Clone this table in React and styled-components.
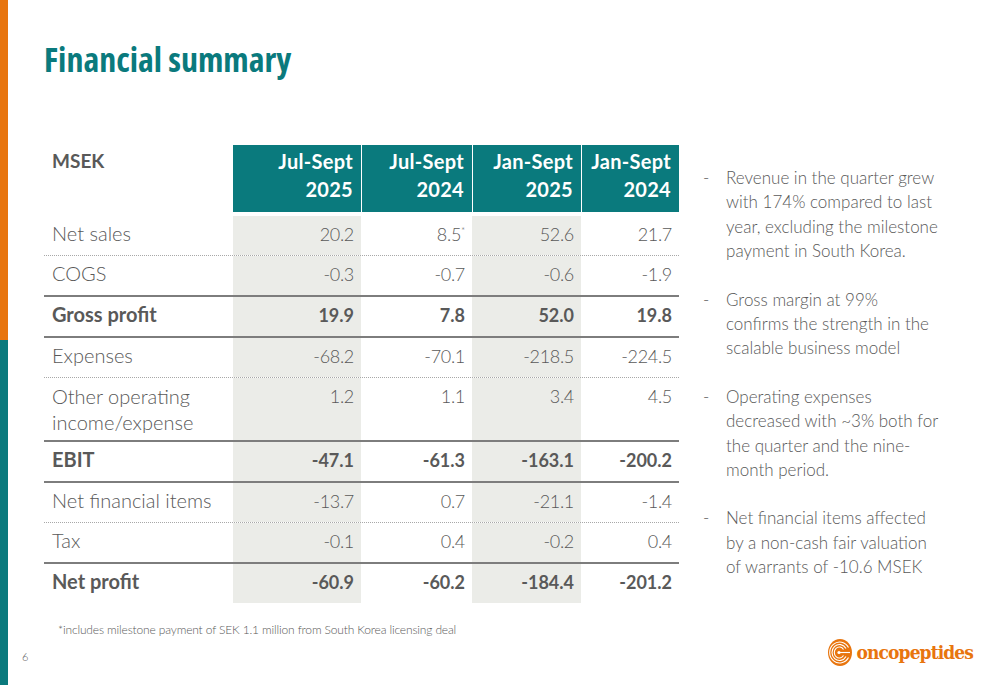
import React from "react";
import styled, { createGlobalStyle } from "styled-components";

const GlobalStyle = createGlobalStyle`
  html, body {
    margin: 0;
    padding: 0;
    background: #fff;
  }
  body {
    font-family: Lato, "Open Sans", sans-serif;
    color: #595959;
  }
`;

const TEAL = "#0a7a7d";
const ORANGE = "#e8750e";
const GREY_TEXT = "#595959";
const SHADE = "#ebece8";

const Slide = styled.div`
  width: 1000px;
  height: 685px;
  display: flex;
  overflow: hidden;
  background: #fff;
`;

const SideBar = styled.div`
  flex: 0 0 8px;
  display: flex;
  flex-direction: column;
`;

const BarSegment = styled.div`
  background: ${({ $color }) => $color};
  flex: ${({ $size }) => ($size ? `0 0 ${$size}px` : "1")};
`;

const Main = styled.div`
  flex: 1;
  display: flex;
  flex-direction: column;
`;

const Title = styled.h1`
  margin: 0;
  padding: 37px 0 0 36px;
  font-family: "Open Sans", sans-serif;
  font-weight: 700;
  font-size: 34px;
  font-stretch: 75%;
  line-height: 44px;
  color: ${TEAL};
`;

const Content = styled.div`
  display: flex;
  margin-top: 64px;
  padding-left: 36px;
`;

const Table = styled.div`
  width: 635px;
  display: flex;
  flex-direction: column;
`;

const lines = {
  solid: "2px solid #7d7d7d",
  dotted: "1px dotted #a8a8a8",
  none: "none",
};

const Row = styled.div`
  display: grid;
  grid-template-columns: 189px 128px 111px 109px 98px;
  height: ${({ $h }) => $h}px;
  border-bottom: ${({ $line }) => lines[$line || "none"]};
`;

const HeaderRow = styled(Row)`
  margin-bottom: 4px;
`;

const HeadCell = styled.div`
  padding: 2px 8px 0 8px;
  font-size: ${({ $left }) => ($left ? 19 : 20)}px;
  font-weight: 700;
  line-height: 28px;
  letter-spacing: ${({ $left }) => ($left ? 0 : 0.3)}px;
  text-align: ${({ $left }) => ($left ? "left" : "right")};
  color: ${({ $left }) => ($left ? GREY_TEXT : "#fff")};
  background: ${({ $left }) => ($left ? "transparent" : TEAL)};
  border-left: ${({ $gap }) => ($gap ? "1px solid #fff" : "none")};
`;

const Label = styled.div`
  padding: 5px 0 0 8px;
  font-size: 20px;
  line-height: ${({ $tall }) => ($tall ? 26 : 24)}px;
  font-weight: ${({ $bold }) => ($bold ? 700 : 300)};
`;

const Value = styled.div`
  padding: 6px 7px 0 0;
  text-align: right;
  font-size: 18px;
  line-height: 24px;
  letter-spacing: ${({ $bold }) => ($bold ? 0 : -0.3)}px;
  font-weight: ${({ $bold }) => ($bold ? 700 : 300)};
  background: ${({ $shade }) => ($shade ? SHADE : "transparent")};
`;

const Star = styled.sup`
  font-size: 10px;
  line-height: 0;
  vertical-align: 7px;
`;

const Bullets = styled.ul`
  list-style: none;
  margin: 21px 0 0 24px;
  padding: 0;
  display: flex;
  flex-direction: column;
  gap: 24px;
`;

const Bullet = styled.li`
  display: flex;
  font-size: 17px;
  line-height: 24.4px;
  font-weight: 300;
`;

const Dash = styled.span`
  flex: 0 0 23px;
`;

const Footnote = styled.div`
  margin-top: 19px;
  padding-left: 50px;
  font-size: 12px;
  line-height: 16px;
  letter-spacing: -0.15px;
  font-weight: 300;
`;

const BottomRow = styled.div`
  display: flex;
  align-items: center;
  justify-content: space-between;
  padding: 0 27px 0 14px;
`;

const PageNumber = styled.span`
  padding-top: 8px;
  font-size: 11px;
  font-weight: 300;
`;

const Logo = styled.div`
  display: flex;
  align-items: center;
  gap: 5px;
  color: ${ORANGE};
`;

const LogoText = styled.span`
  font-family: "DejaVu Serif", serif;
  font-weight: 700;
  font-size: 19px;
  font-stretch: condensed;
  line-height: 28px;
  letter-spacing: -0.9px;
`;

const LogoMark = () => (
  <svg width="24" height="27" viewBox="0 0 24 27">
    <ellipse cx="12" cy="13.5" rx="12" ry="13.5" fill={ORANGE} />
    <g fill="none" stroke="#fff" strokeWidth="1.1">
      <path d="M20.5 8.5 A10 10.5 0 1 0 20.5 18.5" />
      <path d="M18 9.5 A7.5 8 0 1 0 18 17.5" />
      <path d="M15.5 10.5 A5 5.5 0 1 0 15.5 16.5" />
      <path d="M12 13.5 L22 13.5" />
    </g>
    <circle cx="11" cy="13.5" r="1.6" fill="#fff" />
  </svg>
);

const rows = [
  { label: "Net sales", values: ["20.2", "8.5*", "52.6", "21.7"], line: "dotted" },
  { label: "COGS", values: ["-0.3", "-0.7", "-0.6", "-1.9"], line: "solid" },
  { label: "Gross profit", values: ["19.9", "7.8", "52.0", "19.8"], line: "solid", bold: true },
  { label: "Expenses", values: ["-68.2", "-70.1", "-218.5", "-224.5"], line: "dotted" },
  {
    label: ["Other operating", "income/expense"],
    values: ["1.2", "1.1", "3.4", "4.5"],
    line: "solid",
    tall: true,
  },
  { label: "EBIT", values: ["-47.1", "-61.3", "-163.1", "-200.2"], line: "solid", bold: true },
  { label: "Net financial items", values: ["-13.7", "0.7", "-21.1", "-1.4"], line: "dotted" },
  { label: "Tax", values: ["-0.1", "0.4", "-0.2", "0.4"], line: "solid" },
  { label: "Net profit", values: ["-60.9", "-60.2", "-184.4", "-201.2"], bold: true },
];

const headers = [
  ["Jul-Sept", "2025"],
  ["Jul-Sept", "2024"],
  ["Jan-Sept", "2025"],
  ["Jan-Sept", "2024"],
];

const bullets = [
  ["Revenue in the quarter grew", "with 174% compared to last", "year, excluding the milestone", "payment in South Korea."],
  ["Gross margin at 99%", "confirms the strength in the", "scalable business model"],
  ["Operating expenses", "decreased with ~3% both for", "the quarter and the nine-", "month period."],
  ["Net financial items affected", "by a non-cash fair valuation", "of warrants of  -10.6 MSEK"],
];

const renderValue = (v) =>
  v.endsWith("*") ? (
    <>
      {v.slice(0, -1)}
      <Star>*</Star>
    </>
  ) : (
    v
  );

const Lines = ({ items }) =>
  items.map((t, i) => (
    <React.Fragment key={i}>
      {i > 0 && <br />}
      {t}
    </React.Fragment>
  ));

export default function App() {
  return (
    <>
      <GlobalStyle />
      <Slide>
        <SideBar>
          <BarSegment $color={ORANGE} $size={340} />
          <BarSegment $color={TEAL} />
        </SideBar>
        <Main>
          <Title>Financial summary</Title>
          <Content>
            <Table>
              <HeaderRow $h={67}>
                <HeadCell $left>MSEK</HeadCell>
                {headers.map((h, i) => (
                  <HeadCell key={i} $gap={i > 0}>
                    <Lines items={h} />
                  </HeadCell>
                ))}
              </HeaderRow>
              {rows.map((r, i) => (
                <Row key={i} $h={r.tall ? 62 : 39} $line={r.line}>
                  <Label $bold={r.bold} $tall={r.tall}>
                    {Array.isArray(r.label) ? <Lines items={r.label} /> : r.label}
                  </Label>
                  {r.values.map((v, j) => (
                    <Value key={j} $bold={r.bold} $shade={j % 2 === 0}>
                      {renderValue(v)}
                    </Value>
                  ))}
                </Row>
              ))}
            </Table>
            <Bullets>
              {bullets.map((b, i) => (
                <Bullet key={i}>
                  <Dash>-</Dash>
                  <span>
                    <Lines items={b} />
                  </span>
                </Bullet>
              ))}
            </Bullets>
          </Content>
          <Footnote>
            *includes milestone payment of SEK 1.1 million from South Korea licensing deal
          </Footnote>
          <BottomRow>
            <PageNumber>6</PageNumber>
            <Logo>
              <LogoMark />
              <LogoText>oncopeptides</LogoText>
            </Logo>
          </BottomRow>
        </Main>
      </Slide>
    </>
  );
}
